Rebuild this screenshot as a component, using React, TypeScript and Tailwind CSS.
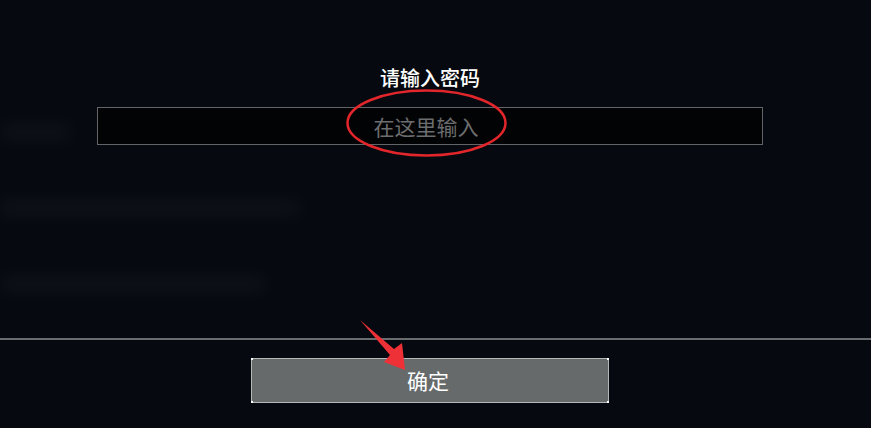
import React from "react";

export default function App() {
  return (
    <div
      className="relative w-[871px] h-[428px] overflow-hidden bg-[#060a10] flex flex-col"
      style={{ fontFamily: '"Noto Sans CJK SC", "Noto Sans", sans-serif' }}
    >
      {/* faint blurred background content */}
      <div className="pointer-events-none absolute inset-0 flex flex-col gap-[60px] pt-[124px] blur-[8px] opacity-[0.03]">
        <div className="h-[16px] w-[70px] bg-white" />
        <div className="h-[16px] w-[300px] bg-white" />
        <div className="h-[16px] w-[265px] bg-white" />
      </div>

      <div className="relative flex flex-col items-center w-[666px] ml-[97px] pt-[66px]">
        <div className="h-[24px] leading-[24px] text-[20px] font-medium text-white">请输入密码</div>
        <div className="mt-[17px] w-full h-[38px] border border-[#626467] bg-[#020305] flex items-center justify-center pr-[8px]">
          <span className="text-[21px] leading-none text-[#6c6d6e]">在这里输入</span>
        </div>
      </div>

      <div className="relative mt-[193px] h-[2px] w-full bg-[#6a6d70]" />

      <div className="relative ml-[251px] mt-[18px] w-[358px] h-[45px] border border-[#b5b7b8] bg-[#666a6b] flex items-center justify-center pr-[4px]">
        <span className="text-[21px] leading-none text-white">确定</span>
        <span className="absolute left-[-1px] top-[-1px] w-[2px] h-[2px] bg-white" />
        <span className="absolute right-[-1px] top-[-1px] w-[2px] h-[2px] bg-white" />
        <span className="absolute left-[-1px] bottom-[-1px] w-[2px] h-[2px] bg-white" />
        <span className="absolute right-[-1px] bottom-[-1px] w-[2px] h-[2px] bg-white" />
      </div>

      {/* annotations */}
      <svg
        className="pointer-events-none absolute left-0 top-0"
        width="871"
        height="428"
        viewBox="0 0 871 428"
      >
        <ellipse cx="426.5" cy="123" rx="79" ry="32.5" fill="none" stroke="#e3262b" strokeWidth="2.5" />
        <polygon
          points="360,320 394,349 402,343 405,370 384,362 390,355"
          fill="#ee3136"
        />
      </svg>
    </div>
  );
}
